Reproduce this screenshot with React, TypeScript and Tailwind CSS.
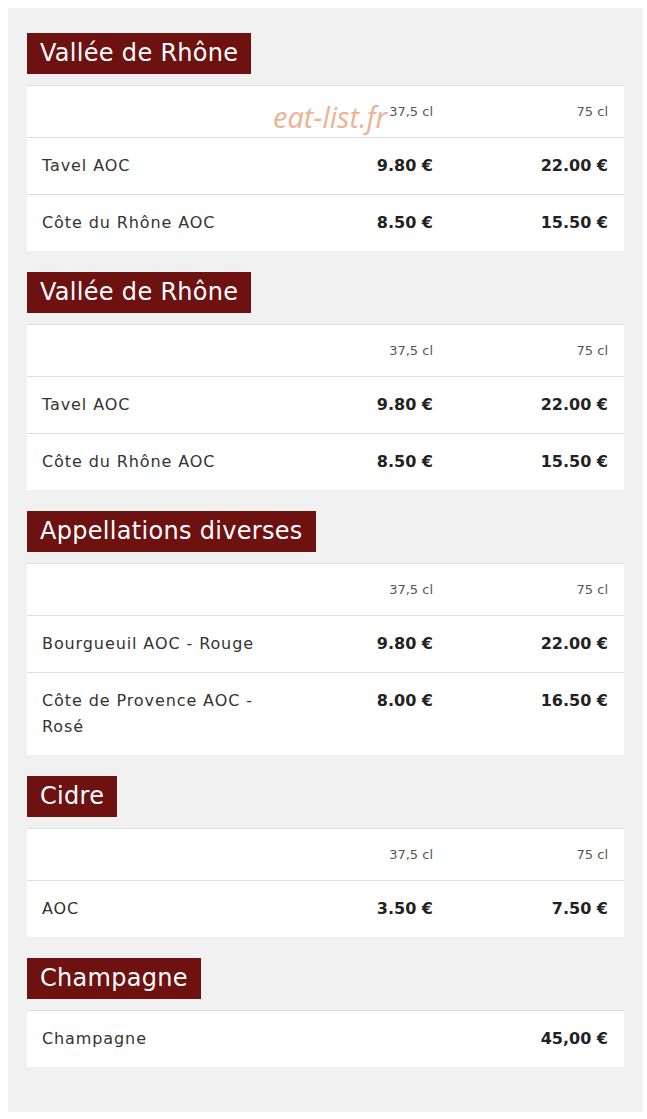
import React from 'react';

type Row = { name: string; p1?: string; p2: string };
type Section = { title: string; sizes: boolean; rows: Row[] };

const SECTIONS: Section[] = [
  {
    title: 'Vallée de Rhône',
    sizes: true,
    rows: [
      { name: 'Tavel AOC', p1: '9.80 €', p2: '22.00 €' },
      { name: 'Côte du Rhône AOC', p1: '8.50 €', p2: '15.50 €' },
    ],
  },
  {
    title: 'Vallée de Rhône',
    sizes: true,
    rows: [
      { name: 'Tavel AOC', p1: '9.80 €', p2: '22.00 €' },
      { name: 'Côte du Rhône AOC', p1: '8.50 €', p2: '15.50 €' },
    ],
  },
  {
    title: 'Appellations diverses',
    sizes: true,
    rows: [
      { name: 'Bourgueuil AOC - Rouge', p1: '9.80 €', p2: '22.00 €' },
      { name: 'Côte de Provence AOC - Rosé', p1: '8.00 €', p2: '16.50 €' },
    ],
  },
  {
    title: 'Cidre',
    sizes: true,
    rows: [{ name: 'AOC', p1: '3.50 €', p2: '7.50 €' }],
  },
  {
    title: 'Champagne',
    sizes: false,
    rows: [{ name: 'Champagne', p2: '45,00 €' }],
  },
];

const MenuSection: React.FC<{ section: Section; watermark?: boolean }> = ({ section, watermark }) => (
  <div className="mb-[21px]">
    <div className="inline-block bg-[#6e1111] text-white text-[24px] tracking-[0.3px] leading-[41px] h-[41px] px-[13px]">
      {section.title}
    </div>
    <div className="relative mt-[11px] bg-white border-t border-[#dedede]">
      {section.sizes && (
        <div className="grid grid-cols-[269px_152px_176px] text-[13px] leading-[21px] text-[#555] border-b border-[#dedede]">
          <div className="py-[15px] px-[15px]" />
          <div className="py-[15px] px-[15px] text-right">37,5 cl</div>
          <div className="py-[15px] pl-[15px] pr-[16px] text-right">75 cl</div>
        </div>
      )}
      {section.rows.map((row, i) => (
        <div
          key={i}
          className={`grid grid-cols-[269px_152px_176px] text-[16px] leading-[26px] ${
            i < section.rows.length - 1 ? 'border-b border-[#dedede]' : ''
          }`}
        >
          <div className="py-[15px] pl-[15px] pr-[25px] text-[#333] tracking-[0.9px]">{row.name}</div>
          <div className="py-[15px] px-[15px] text-right font-bold text-[#222]">{row.p1 ?? ''}</div>
          <div className="py-[15px] pl-[15px] pr-[16px] text-right font-bold text-[#222]">{row.p2}</div>
        </div>
      ))}
      {watermark && (
        <div className="absolute left-[246px] top-[9px] text-[29px] italic text-[#eea684]/90 font-['Open_Sans',sans-serif] pointer-events-none">
          eat-list.fr
        </div>
      )}
    </div>
  </div>
);

export default function App() {
  return (
    <div className="w-[647px] min-h-[1119px] bg-white pt-2 pl-2 font-['DejaVu_Sans',sans-serif]">
      <div className="w-[635px] bg-[#f1f1f1] pt-[25px] pb-[24px] px-[19px]">
        {SECTIONS.map((s, i) => (
          <MenuSection key={i} section={s} watermark={i === 0} />
        ))}
      </div>
    </div>
  );
}
